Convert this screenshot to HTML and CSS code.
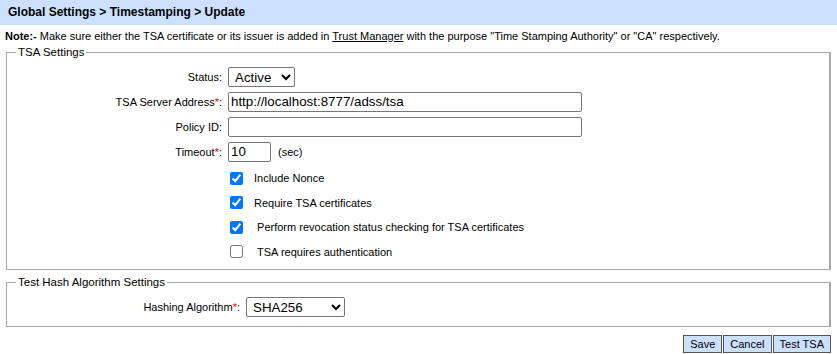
FILE: index.html
```html
<!DOCTYPE html>
<html lang="en">
<head>
    <meta charset="UTF-8">
    <title>Timestamping - Update</title>
    <link rel="stylesheet" href="styles.css">
</head>
<body>
    <div class="page-title">Global Settings &gt; Timestamping &gt; Update</div>
    <div class="note"><b>Note:-</b> Make sure either the TSA certificate or its issuer is added in <a href="#">Trust Manager</a> with the purpose "Time Stamping Authority" or "CA" respectively.</div>

    <form id="tsaForm">
        <fieldset class="tsa-settings">
            <legend>TSA Settings</legend>
            <div class="form-row">
                <label for="status">Status:</label>
                <select id="status" class="status-select">
                    <option>Active</option>
                    <option>Inactive</option>
                </select>
            </div>
            <div class="form-row">
                <label for="server">TSA Server Address<span class="req">*</span>:</label>
                <input type="text" id="server" class="wide" value="http://localhost:8777/adss/tsa">
            </div>
            <div class="form-row">
                <label for="policy">Policy ID:</label>
                <input type="text" id="policy" class="wide">
            </div>
            <div class="form-row">
                <label for="timeout">Timeout<span class="req">*</span>:</label>
                <input type="text" id="timeout" class="short" value="10">
                <span class="unit">(sec)</span>
            </div>
            <div class="check-row"><input type="checkbox" id="nonce" checked><label for="nonce">Include Nonce</label></div>
            <div class="check-row"><input type="checkbox" id="reqcert" checked><label for="reqcert">Require TSA certificates</label></div>
            <div class="check-row"><input type="checkbox" id="revoke" checked><label for="revoke">&nbsp;Perform revocation status checking for TSA certificates</label></div>
            <div class="check-row"><input type="checkbox" id="auth"><label for="auth">&nbsp;TSA requires authentication</label></div>
        </fieldset>

        <fieldset class="hash-settings">
            <legend>Test Hash Algorithm Settings</legend>
            <div class="form-row">
                <label for="hash">Hashing Algorithm<span class="req">*</span>:</label>
                <select id="hash" class="hash-select">
                    <option>SHA256</option>
                    <option>SHA1</option>
                    <option>SHA384</option>
                    <option>SHA512</option>
                </select>
            </div>
        </fieldset>

        <div class="buttons">
            <button type="submit">Save</button>
            <button type="button">Cancel</button>
            <button type="button">Test TSA</button>
        </div>
    </form>
</body>
</html>
```

FILE: styles.css
```css
body {
    margin: 0;
    font-family: "Liberation Sans", Arial, sans-serif;
    font-size: 11px;
    color: #000;
}
.page-title {
    background-color: #cce0ff;
    height: 25px;
    line-height: 25px;
    padding-left: 8px;
    font-weight: bold;
    font-size: 12px;
}
.note {
    padding: 4px 0 0 5px;
    height: 17px;
    line-height: 15px;
}
.note a {
    color: #000;
}
fieldset {
    margin: 0 6px;
    padding: 0;
    border: 1px solid #a9a9a9;
    border-right-width: 2px;
}
legend {
    margin-left: 9px;
    padding: 0 2px;
    font-size: 11.5px;
}
.form-row {
    display: flex;
    align-items: center;
    height: 25px;
}
.form-row label {
    width: 215px;
    text-align: right;
    margin-right: 6px;
}
.req {
    color: #e00000;
}
input[type="text"], select {
    box-sizing: border-box;
    height: 20px;
    margin: 0;
    font-family: "Liberation Sans", Arial, sans-serif;
    font-size: 13.33px;
    border: 1px solid #767676;
    border-radius: 2px;
    padding: 1px 2px;
    background: #fff;
}
.tsa-settings {
    padding-top: 6px;
    padding-bottom: 5px;
}
.wide {
    width: 354px;
}
.short {
    width: 43px;
}
.status-select {
    width: 67px;
}
.unit {
    margin-left: 7px;
}
.check-row {
    display: flex;
    align-items: center;
    height: 24.5px;
    padding-left: 223px;
}
.tsa-settings .form-row:nth-child(5) {
    margin-bottom: 2px;
}
.check-row input {
    margin: 0 11px 0 0;
    width: 13px;
    height: 13px;
}
.hash-settings {
    margin-top: 6px;
    padding-top: 6px;
    padding-bottom: 7px;
}
.hash-settings .form-row label {
    width: 233px;
}
.hash-select {
    width: 99px;
}
.buttons {
    display: flex;
    justify-content: flex-end;
    gap: 1px;
    margin: 8px 6px 0 0;
}
.buttons button {
    height: 18px;
    padding: 0 6px;
    font-family: "Liberation Sans", Arial, sans-serif;
    font-size: 11px;
    background-color: #cce0ff;
    border: 1px solid #555;
}
```
